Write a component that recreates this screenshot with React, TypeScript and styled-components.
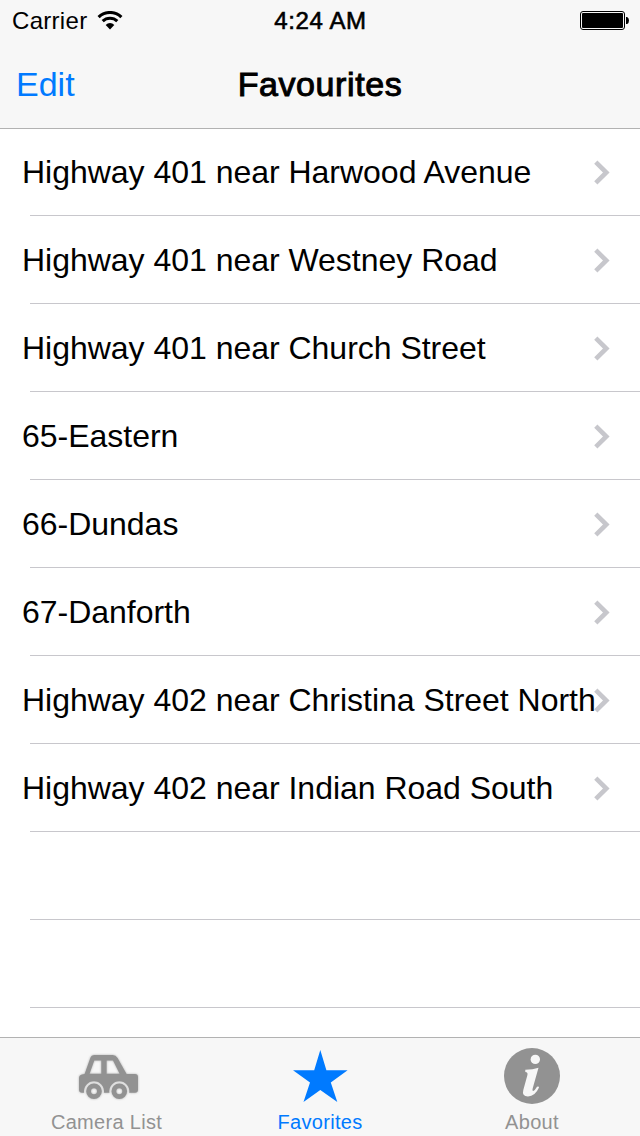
import styled, { createGlobalStyle } from "styled-components";

interface TabProps {
  $active: boolean;
}

const favourites = [
  "Highway 401 near Harwood Avenue",
  "Highway 401 near Westney Road",
  "Highway 401 near Church Street",
  "65-Eastern",
  "66-Dundas",
  "67-Danforth",
  "Highway 402 near Christina Street North",
  "Highway 402 near Indian Road South",
];

const WifiIcon = () => (
  <svg width="26" height="19" viewBox="0 0 26 19">
    <g fill="none" stroke="#000" strokeWidth="3.1">
      <path d="M1.600 6.100A16.400 16.400 0 0 1 24.400 6.100" />
      <path d="M5.700 10.200A10.600 10.600 0 0 1 20.300 10.200" />
    </g>
    <path d="M8.700 13.900A6 6 0 0 1 17.300 13.900L13 18.400Z" fill="#000" />
  </svg>
);

const BatteryIcon = () => (
  <svg width="49" height="20" viewBox="0 0 49 20">
    <rect x="0.5" y="0.5" width="44" height="18" rx="2.5" fill="none" stroke="#000" />
    <rect x="2" y="2" width="41" height="15" rx="1" />
    <path d="M46 6h1.200q1.800 1 1.800 3.500t-1.800 3.500h-1.200z" />
  </svg>
);

const ChevronIcon = () => (
  <svg width="17" height="26" viewBox="0 0 17 26">
    <path d="M2.800 2.200L13.300 12.500L2.800 22.800" fill="none" stroke="#c7c7cc" strokeWidth="4.600" />
  </svg>
);

const CarIcon = () => (
  <Car width="69" height="64" viewBox="0 0 69 64">
    <path
      d="M22.500 11H40.500Q43.800 11 45.600 14L54.600 30H63Q66 30 66 33V45.700Q66 48.700 63 48.700H57.200A10 10 0 1 0 37.400 48.700H31.900A10 10 0 1 0 12.100 48.700H10Q7 48.700 7 45.700V34Q7 31 10 30.500L12.600 30L18.300 14Q19.300 11 22.500 11ZM22.300 16.500L17.600 29.700H29.300V16.500ZM34.600 16.500V29.700H47.600L41 16.500Z"
      fill="#929292"
      fillRule="evenodd"
    />
    <g fill="none" stroke="#929292" strokeWidth="4.800">
      <circle cx="22" cy="47.300" r="5.400" />
      <circle cx="47.300" cy="47.300" r="5.400" />
    </g>
  </Car>
);

const StarIcon = () => (
  <svg width="56" height="54" viewBox="0 0 56 54">
    <path
      d="M28.300 1L34.400 21.200H55.600L38.800 33.400L45.300 53L28.300 41L11.500 53L18 33.400L1 21.200H22.200Z"
      fill="#007aff"
    />
  </svg>
);

const InfoIcon = () => (
  <svg width="56" height="56" viewBox="0 0 56 56">
    <circle cx="28" cy="28" r="28" fill="#929292" />
    <circle cx="31.300" cy="11.400" r="4.700" fill="#f7f7f7" />
    <path
      d="M21.300 21.700Q29 21.500 34.500 19.700L28.800 40Q28 43 29.300 43Q30.800 42.600 33 38.800Q34.800 37.800 35 39.500Q31 48.400 24 48.400Q17.600 48.400 19.300 42L23.300 27.500Q24.300 24.200 21.300 24Z"
      fill="#f7f7f7"
    />
  </svg>
);

const tabs = [
  { label: "Camera List", icon: <CarIcon />, active: false },
  { label: "Favorites", icon: <StarIcon />, active: true },
  { label: "About", icon: <InfoIcon />, active: false },
];

export default function App() {
  return (
    <Screen>
      <GlobalStyle />
      <Header>
        <StatusBar>
          <Carrier>
            Carrier
            <WifiIcon />
          </Carrier>
          <Time>4:24 AM</Time>
          <Battery>
            <BatteryIcon />
          </Battery>
        </StatusBar>
        <NavBar>
          <EditButton>Edit</EditButton>
          <Title>Favourites</Title>
        </NavBar>
      </Header>
      <List>
        {favourites.map((name) => (
          <Row key={name}>
            <RowLabel>{name}</RowLabel>
            <ChevronIcon />
          </Row>
        ))}
        <Row />
        <Row />
      </List>
      <TabBar>
        {tabs.map(({ label, icon, active }) => (
          <Tab key={label} $active={active}>
            <TabIcon>{icon}</TabIcon>
            <TabLabel>{label}</TabLabel>
          </Tab>
        ))}
      </TabBar>
    </Screen>
  );
}

const GlobalStyle = createGlobalStyle`
  * {
    box-sizing: border-box;
  }
  body {
    margin: 0;
    background-color: #fff;
    font-family: "Liberation Sans", Arial, sans-serif;
  }
  svg {
    display: block;
    flex-shrink: 0;
  }
`;

const Car = styled.svg`
  filter: drop-shadow(0 0 1px rgba(146, 146, 146, 0.7));
`;

const Screen = styled.div`
  display: flex;
  flex-direction: column;
  width: 640px;
  height: 1136px;
  overflow: hidden;
  color: #000;
`;

const Header = styled.header`
  height: 129px;
  margin-bottom: -1px;
  flex-shrink: 0;
  background-color: #f7f7f7;
  border-bottom: 1px solid #b2b2b2;
`;

const StatusBar = styled.div`
  display: grid;
  grid-template-columns: 1fr auto 1fr;
  align-items: center;
  height: 40px;
  padding: 1px 11px 0 12px;
`;

const Carrier = styled.div`
  display: flex;
  align-items: center;
  gap: 10px;
  font-size: 24px;
  letter-spacing: 0.3px;
`;

const Time = styled.div`
  font-size: 24px;
  letter-spacing: 0.6px;
  -webkit-text-stroke: 0.6px #000;
`;

const Battery = styled.div`
  display: flex;
  justify-content: flex-end;
`;

const NavBar = styled.div`
  display: grid;
  grid-template-columns: 1fr auto 1fr;
  align-items: center;
  height: 88px;
  padding: 0 16px;
`;

const EditButton = styled.button`
  justify-self: start;
  padding: 0;
  border: none;
  background: none;
  color: #007aff;
  font-family: inherit;
  font-size: 34px;
`;

const Title = styled.h1`
  margin: 0;
  font-size: 34px;
  font-weight: 400;
  letter-spacing: 0.6px;
  -webkit-text-stroke: 1px #000;
`;

const List = styled.main`
  flex: 1;
  min-height: 0;
`;

const Row = styled.div`
  display: flex;
  align-items: center;
  height: 88px;
  padding: 1px 0 0 22px;
  background: linear-gradient(#c8c7cc, #c8c7cc) 30px 100% / 100% 1px no-repeat;
`;

const RowLabel = styled.span`
  position: relative;
  z-index: 1;
  width: 571px;
  flex-shrink: 0;
  font-size: 32px;
  white-space: nowrap;
  letter-spacing: -0.02px;
`;

const TabBar = styled.nav`
  display: grid;
  grid-template-columns: 213px 214px 210px;
  height: 99px;
  flex-shrink: 0;
  background-color: #f7f7f7;
  border-top: 1px solid #b2b2b2;
`;

const Tab = styled.div<TabProps>`
  display: flex;
  flex-direction: column;
  align-items: center;
  color: ${(props) => (props.$active ? "#007aff" : "#929292")};
`;

const TabIcon = styled.div`
  display: flex;
  align-items: center;
  justify-content: center;
  height: 76px;
`;

const TabLabel = styled.span`
  margin-top: -4px;
  font-size: 20px;
  line-height: 24px;
  letter-spacing: 0.3px;
`;
